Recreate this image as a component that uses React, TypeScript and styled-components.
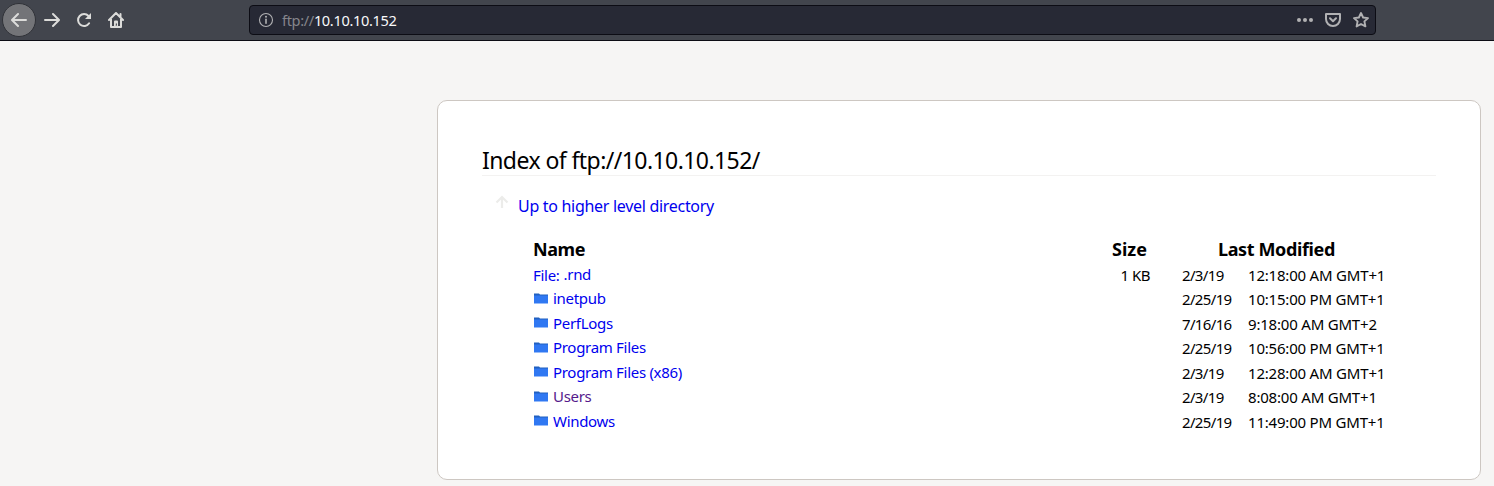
import React from 'react';
import styled, { createGlobalStyle } from 'styled-components';

const GlobalStyle = createGlobalStyle`
  * { box-sizing: border-box; }
  body {
    margin: 0;
    background: #f6f5f4;
    color: #000;
    font-family: "Noto Sans", "Open Sans", sans-serif;
  }
`;

const Page = styled.div`
  height: 486px;
  overflow: hidden;
`;

const Toolbar = styled.header`
  display: flex;
  align-items: center;
  height: 41px;
  padding-left: 2px;
  background: #42454d;
  border-bottom: 1px solid #0c0c14;
`;

const NavButton = styled.button<{ $round?: boolean }>`
  display: grid;
  place-items: center;
  width: ${(p) => (p.$round ? 34 : 32)}px;
  height: ${(p) => (p.$round ? 34 : 32)}px;
  padding: 0;
  border: ${(p) => (p.$round ? '1px solid #303238' : '0')};
  border-radius: 50%;
  background: ${(p) => (p.$round ? '#737478' : 'transparent')};
  color: #dcdcda;
`;

const AddressBar = styled.div`
  display: flex;
  align-items: center;
  width: 1127px;
  height: 30px;
  margin-left: 117px;
  padding: 0 6px 0 8px;
  border: 1px solid #0c0c14;
  border-radius: 4px;
  background: #272935;
  color: #b1b1b3;
`;

const Address = styled.div`
  flex: 1;
  margin-left: 8px;
  font-size: 14.6px;
  letter-spacing: -0.36px;
  line-height: 20px;
  color: #f9f9fa;
`;

const Scheme = styled.span`
  color: #85858b;
`;

const ActionIcons = styled.div`
  display: flex;
  gap: 12px;
`;

const Card = styled.main`
  width: 1044px;
  height: 380px;
  margin: 59px 0 0 437px;
  padding: 44px 44px 0;
  border: 1px solid #cdc7c2;
  border-radius: 10px;
  background: #fff;
`;

const Title = styled.h1`
  height: 31px;
  margin: 0;
  border-bottom: 1px solid #f3f2f1;
  font-size: 23px;
  font-weight: 400;
  letter-spacing: -0.57px;
  line-height: 31px;
`;

const UpLink = styled.a`
  display: flex;
  align-items: center;
  gap: 9px;
  height: 20px;
  margin: 20px 0 0 13px;
  color: #0000ee;
  font-size: 16px;
  letter-spacing: -0.3px;
  line-height: 20px;
  text-decoration: none;

  svg { margin-top: -8px; }
`;

const Listing = styled.table`
  margin: 19px 0 0 51px;
  border-collapse: collapse;
  table-layout: fixed;
  width: 860px;
`;

const HeadCell = styled.th<{ $align?: string; $indent?: number; $tracking?: number }>`
  height: 28px;
  padding: 0 0 1px ${(p) => p.$indent ?? 0}px;
  font-size: 18px;
  font-weight: 700;
  letter-spacing: ${(p) => p.$tracking ?? 0}px;
  line-height: 24px;
  text-align: ${(p) => p.$align ?? 'left'};
`;

const Cell = styled.td<{ $align?: string; $padRight?: number; $tracking?: number }>`
  height: 24.5px;
  padding: 0 ${(p) => p.$padRight ?? 0}px 1px 0;
  font-size: 15px;
  letter-spacing: ${(p) => p.$tracking ?? 0}px;
  line-height: 20px;
  text-align: ${(p) => p.$align ?? 'left'};
  white-space: nowrap;
`;

const NameCell = styled(Cell)`
  padding: 0 0 1px;
`;

const EntryLink = styled.a<{ $visited?: boolean }>`
  display: flex;
  align-items: center;
  gap: 4px;
  height: 22px;
  color: ${(p) => (p.$visited ? '#551a8b' : '#0000ee')};
  text-decoration: none;

  svg { margin-bottom: 1px; }
`;

const EntryName = styled.span`
  margin-bottom: 2px;
`;

const Folder = () => (
  <svg width="16" height="14" viewBox="0 0 16 14">
    <path d="M1 1.5h5l1 1h8v3H1z" fill="#2160c0" />
    <path d="M1 3.5h14v8H1z" fill="#3078f2" />
  </svg>
);

const stroke = { fill: 'none', stroke: 'currentColor', strokeWidth: 2, strokeLinecap: 'round', strokeLinejoin: 'round' } as const;

const BackIcon = () => (
  <svg width="16" height="16" viewBox="0 0 16 16"><path d="M15 8H1.5M7 2 1 8l6 6" {...stroke} /></svg>
);
const ForwardIcon = () => (
  <svg width="16" height="16" viewBox="0 0 16 16"><path d="M1 8h13.5M9 2l6 6-6 6" {...stroke} /></svg>
);
const ReloadIcon = () => (
  <svg width="16" height="16" viewBox="0 0 16 16">
    <path d="M13.1 11.3A6 6 0 1 1 12.5 4" {...stroke} />
    <path d="M15 1v6H9z" fill="currentColor" />
  </svg>
);
const HomeIcon = () => (
  <svg width="16" height="16" viewBox="0 0 16 16">
    <path d="M1 8l7-7 7 7M3 7v8h10V7M12.5 2v3" {...stroke} />
    <path d="M6 15V9.5a1 1 0 0 1 1-1h2a1 1 0 0 1 1 1V15H8.6v-2.2H9v-1.3H7.8V15z" fill="currentColor" />
  </svg>
);
const InfoIcon = () => (
  <svg width="16" height="16" viewBox="0 0 16 16">
    <circle cx="8" cy="8" r="6.5" fill="none" stroke="currentColor" strokeWidth="1.1" />
    <path d="M8 7.3v4" {...stroke} strokeWidth={1.6} />
    <circle cx="8" cy="4.8" r="1" fill="currentColor" />
  </svg>
);
const MoreIcon = () => (
  <svg width="16" height="16" viewBox="0 0 16 16" fill="currentColor">
    <circle cx="2" cy="8" r="2" /><circle cx="8" cy="8" r="2" /><circle cx="14" cy="8" r="2" />
  </svg>
);
const PocketIcon = () => (
  <svg width="16" height="16" viewBox="0 0 16 16">
    <path d="M1 2h14v5a7 7 0 0 1-14 0zM5 6.3l3 2.9 3-2.9" {...stroke} />
  </svg>
);
const StarIcon = () => (
  <svg width="16" height="16" viewBox="0 0 16 16">
    <path d="M8 1l2.1 4.5 4.9.6-3.6 3.3 1 5L8 12l-4.4 2.4 1-5L1 6.1l4.9-.6z" {...stroke} strokeWidth={1.9} />
  </svg>
);
const UpIcon = () => (
  <svg width="14" height="14" viewBox="0 0 14 14">
    <path d="M7 13V2M1.5 7.5 7 2l5.500 5.500" fill="none" stroke="#ececea" strokeWidth="2.2" />
  </svg>
);

const entries = [
  { name: '.rnd', file: true, size: '1 KB', date: '2/3/19', time: '12:18:00 AM GMT+1' },
  { name: 'inetpub', date: '2/25/19', time: '10:15:00 PM GMT+1' },
  { name: 'PerfLogs', date: '7/16/16', time: '9:18:00 AM GMT+2' },
  { name: 'Program Files', date: '2/25/19', time: '10:56:00 PM GMT+1' },
  { name: 'Program Files (x86)', date: '2/3/19', time: '12:28:00 AM GMT+1' },
  { name: 'Users', visited: true, date: '2/3/19', time: '8:08:00 AM GMT+1' },
  { name: 'Windows', date: '2/25/19', time: '11:49:00 PM GMT+1' },
];

export default function App() {
  return (
    <Page>
      <GlobalStyle />
      <Toolbar>
        <NavButton $round aria-label="Back"><BackIcon /></NavButton>
        <NavButton aria-label="Forward"><ForwardIcon /></NavButton>
        <NavButton aria-label="Reload"><ReloadIcon /></NavButton>
        <NavButton aria-label="Home"><HomeIcon /></NavButton>
        <AddressBar>
          <InfoIcon />
          <Address><Scheme>ftp://</Scheme>10.10.10.152</Address>
          <ActionIcons><MoreIcon /><PocketIcon /><StarIcon /></ActionIcons>
        </AddressBar>
      </Toolbar>
      <Card>
        <Title>Index of ftp://10.10.10.152/</Title>
        <UpLink><UpIcon />Up to higher level directory</UpLink>
        <Listing>
          <colgroup>
            <col style={{ width: 560 }} />
            <col style={{ width: 89 }} />
            <col style={{ width: 66 }} />
            <col style={{ width: 145 }} />
          </colgroup>
          <thead>
            <tr>
              <HeadCell $tracking={-0.4}>Name</HeadCell>
              <HeadCell $indent={19}>Size</HeadCell>
              <HeadCell colSpan={2} $indent={36} $tracking={-0.38}>Last Modified</HeadCell>
            </tr>
          </thead>
          <tbody>
            {entries.map((e) => (
              <tr key={e.name}>
                <NameCell $tracking={-0.3}>
                  <EntryLink $visited={e.visited}>
                    {e.file ? <span>File:</span> : <Folder />}
                    <EntryName>{e.name}</EntryName>
                  </EntryLink>
                </NameCell>
                <Cell $align="right" $padRight={32} $tracking={-0.5}>{e.size}</Cell>
                <Cell $tracking={-0.65}>{e.date}</Cell>
                <Cell $tracking={-0.2}>{e.time}</Cell>
              </tr>
            ))}
          </tbody>
        </Listing>
      </Card>
    </Page>
  );
}
